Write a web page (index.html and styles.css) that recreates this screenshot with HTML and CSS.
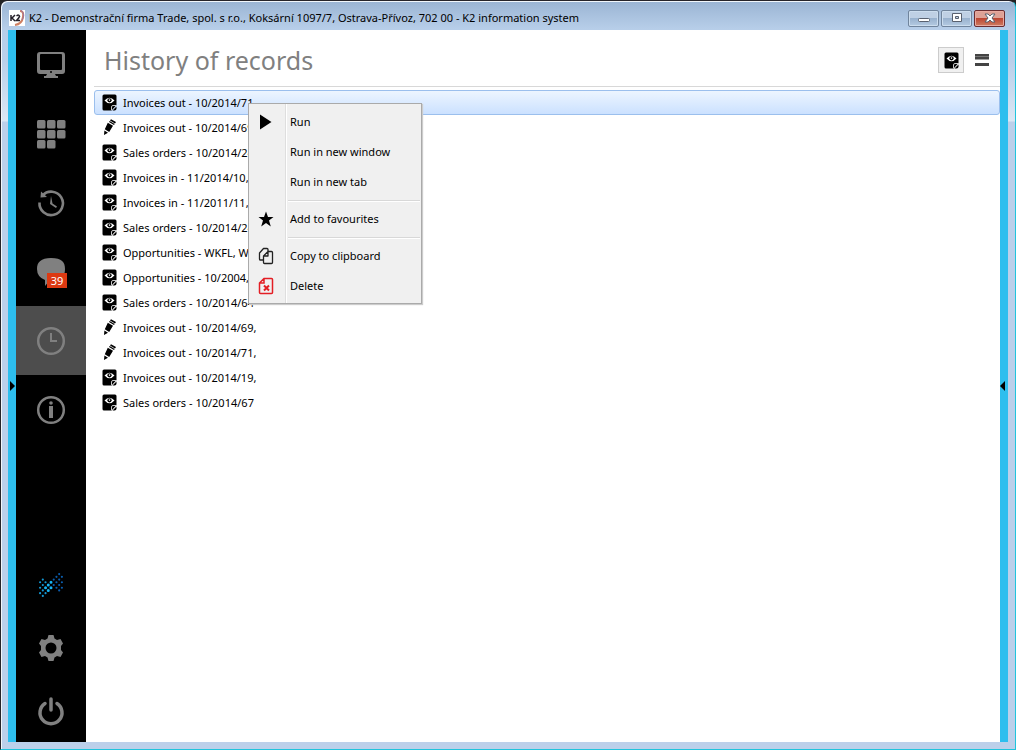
FILE: index.html
```html
<!DOCTYPE html>
<html lang="en">
<head>
<meta charset="utf-8">
<title>K2 information system</title>
<link rel="stylesheet" href="styles.css">
</head>
<body>
<svg class="defs" aria-hidden="true">
  <symbol id="record" viewBox="0 0 15 17">
    <path d="M2 0.500H13Q14.500 .5 14.500 2V11L9.500 16.500H2Q.5 16.500 .5 15V2Q.5 .5 2 .5Z" fill="#000"/>
    <path d="M2.500 6.500Q7.500 .8 12.500 6.500Q7.500 12 2.500 6.500Z" fill="#fff"/>
    <circle cx="7.500" cy="6.300" r="2.100" fill="#000"/><circle cx="7.500" cy="6.100" r=".8" fill="#fff"/>
    <path d="M10.500 16.500L14.500 12.500V14.500Q14.500 16.500 12.500 16.500Z" fill="#000"/>
    <path d="M9.500 16V13Q9.500 11.500 11 11.500H14" fill="none" stroke="#ddd" stroke-width=".9"/>
  </symbol>
  <symbol id="pencil" viewBox="0 0 15 17">
    <path d="M5.800 3.800L11 6.800L7.200 13L2.800 10.300Z M8 1.500L9 .2L14 3L13 4.600Z M7 2.900L7.600 2.100L12.700 5.100L12 6Z M2.400 11.500L6 13.800L2 16Z"/>
  </symbol>
</svg>
<div class="window">
  <header class="titlebar">
    <svg class="app-icon" viewBox="0 0 16 16"><path fill="#fff" d="M0 0H16V16H0Z"/><path d="M11 1Q15 1 14 7Q13 14 6 15" fill="none" stroke="#ce7f62" stroke-width="2"/><path d="M12 0Q17 5 13 10" fill="none" stroke="#9a73a5"/><path d="M2 5V11M6 5L3 8L6 11M7.500 6Q10 4 10.500 6.500Q10 8 7.500 10.500H11" fill="none" stroke="#24202a" stroke-width="1.500"/></svg>
    <span class="caption">K2 - Demonstrační firma Trade, spol. s r.o., Koksární 1097/7, Ostrava-Přívoz, 702 00 - K2 information system</span>
    <div class="window-buttons">
      <button aria-label="Minimize"><svg viewBox="0 0 12 10"><rect x=".5" y="5.500" width="11" height="3" rx="1"/></svg></button>
      <button aria-label="Maximize"><svg viewBox="0 0 12 10"><path fill-rule="evenodd" d="M1.500 .5H10.500V8.500H1.500ZM4.500 3.500V5.500H7.500V3.500Z"/></svg></button>
      <button class="close" aria-label="Close"><svg viewBox="0 0 12 10"><path d="M1 1H4L6 3L8 1H11L8 5L11 9H8L6 7L4 9H1L4 5Z"/></svg></button>
    </div>
  </header>
  <div class="body">
    <button class="rail" aria-label="Expand left panel"><svg viewBox="0 0 5 10"><path d="M0 0L5 5L0 10Z"/></svg></button>
    <nav class="sidebar">
      <div class="group">
        <button aria-label="Desktop"><svg viewBox="0 0 30 30"><path fill-rule="evenodd" d="M4 2H26Q29 2 29 5V21Q29 24 26 24H19L20 26H22V28H8V26H10L11 24H4Q1 24 1 21V5Q1 2 4 2ZM5 4Q4 4 4 5V19Q4 20 5 20H25Q26 20 26 19V5Q26 4 25 4Z"/><circle cx="15" cy="22" r="1" fill="#000"/></svg></button>
        <button aria-label="Modules"><svg viewBox="0 0 30 30"><rect x="1" y="1" width="8.500" height="8.500" rx="1.500"/><rect x="11" y="1" width="8.500" height="8.500" rx="1.500"/><rect x="21" y="1" width="8.500" height="8.500" rx="1.500"/><rect x="1" y="11" width="8.500" height="8.500" rx="1.500"/><rect x="11" y="11" width="8.500" height="8.500" rx="1.500"/><rect x="21" y="11" width="8.500" height="8.500" rx="1.500"/><rect x="1" y="21" width="8.500" height="8.500" rx="1.500"/><rect x="11" y="21" width="8.500" height="8.500" rx="1.500"/></svg></button>
        <button aria-label="Recent"><svg viewBox="0 0 30 30"><path d="M6.500 7.500A11.700 11.700 0 1 1 3.500 14.500" fill="none" stroke="#808080" stroke-width="2.600"/><path d="M5 3.500L4.500 9.500L11 9Z M15 8L14 16L20 20L21 18.500L16.500 15.500Z"/></svg></button>
        <button class="chat" aria-label="Messages, 39 new"><svg viewBox="0 0 30 30"><path d="M15 1C26 1 29 5 29 12C29 20 25 23 15 23Q13 24 9 29L9 23Q1 20 1 12C1 5 5 1 15 1Z"/></svg><span class="badge">39</span></button>
        <button class="active" aria-label="History"><svg viewBox="0 0 30 30" fill="none" stroke="#808080" stroke-width="2.500"><circle cx="15" cy="15" r="12.800"/><path d="M15 7V15H21" stroke-width="2"/></svg></button>
        <button aria-label="Information"><svg viewBox="0 0 30 30"><circle cx="15" cy="15" r="12.800" fill="none" stroke="#808080" stroke-width="2.500"/><circle cx="15" cy="8" r="1.800"/><path d="M13 11H17V23H13Z"/></svg></button>
      </div>
      <div class="group bottom">
        <button aria-label="K2"><svg viewBox="-1.500 -1.500 11 11" fill="none" stroke-linecap="round" stroke-width=".8"><path stroke="#0a5dae" d="M7 0h0M6 1h0M8 1h0M5 2h0M7 2h0M6 3h0M8 3h0M5 4h0M7 4h0M6 5h0M8 5h0M7 6h0"/><path stroke="#1297d4" d="M1 2h0M0 3h0M2 3h0M1 4h0M0 5h0M0 7h0M2 7h0M1 8h0M1 6h0"/><path stroke="#16b4f5" stroke-width="1.100" d="M4 3h0M3 4h0M2 5h0M4 5h0M3 6h0"/></svg></button>
        <button aria-label="Settings"><svg viewBox="0 0 30 30"><path fill-rule="evenodd" d="M12.500 2H17.500L18.500 5.500L21 7L24.500 6L27 10.500L25 13V17L27 19.500L24.500 24L21 23L18.500 24.500L17.500 28H12.500L11.500 24.500L9 23L5.500 24L3 19.500L5 17V13L3 10.500L5.500 6L9 7L11.500 5.500ZM15 9.500A5.500 5.500 0 1 0 15 20.500A5.500 5.500 0 1 0 15 9.500Z"/></svg></button>
        <button aria-label="Log out"><svg viewBox="0 0 30 30" fill="none" stroke="#808080" stroke-width="3.500" stroke-linecap="round"><path d="M9 7.500A11 11 0 1 0 21 7.500M15 3V14"/></svg></button>
      </div>
    </nav>
    <main>
      <div class="heading">
        <h1>History of records</h1>
        <button class="view" aria-label="View record"><svg class="record"><use href="#record"/></svg></button>
        <button class="menu-button" aria-label="Menu"><svg viewBox="0 0 16 14"><path d="M1 1H15V6.500H1ZM1 10H15V13H1Z" fill="#444"/><path d="M1 3.500H15" stroke="#777"/></svg></button>
      </div>
      <ul class="records">
        <li class="selected"><svg class="record"><use href="#record"/></svg>Invoices out - 10/2014/71</li>
        <li><svg class="record"><use href="#pencil"/></svg>Invoices out - 10/2014/69</li>
        <li><svg class="record"><use href="#record"/></svg>Sales orders - 10/2014/24</li>
        <li><svg class="record"><use href="#record"/></svg>Invoices in - 11/2014/10,</li>
        <li><svg class="record"><use href="#record"/></svg>Invoices in - 11/2011/11,</li>
        <li><svg class="record"><use href="#record"/></svg>Sales orders - 10/2014/24</li>
        <li><svg class="record"><use href="#record"/></svg>Opportunities - WKFL, W</li>
        <li><svg class="record"><use href="#record"/></svg>Opportunities - 10/2004,</li>
        <li><svg class="record"><use href="#record"/></svg>Sales orders - 10/2014/64</li>
        <li><svg class="record"><use href="#pencil"/></svg>Invoices out - 10/2014/69,</li>
        <li><svg class="record"><use href="#pencil"/></svg>Invoices out - 10/2014/71,</li>
        <li><svg class="record"><use href="#record"/></svg>Invoices out - 10/2014/19,</li>
        <li><svg class="record"><use href="#record"/></svg>Sales orders - 10/2014/67</li>
      </ul>
      <div class="context-menu" role="menu">
        <button role="menuitem"><svg viewBox="0 0 16 18"><path d="M2 1.500L13.500 9L2 16.500Z"/></svg><span>Run</span></button>
        <button role="menuitem"><i></i><span>Run in new window</span></button>
        <button role="menuitem"><i></i><span>Run in new tab</span></button>
        <hr>
        <button role="menuitem"><svg viewBox="0 0 16 18"><path d="M8 1.500L10 7H15.500L11 10.500L12.800 16.500L8 13L3.200 16.500L5 10.500L.5 7H6Z"/></svg><span>Add to favourites</span></button>
        <hr>
        <button role="menuitem"><svg viewBox="0 0 16 18" fill="none" stroke="#222" stroke-width="1.300" stroke-linejoin="round"><path d="M5.500 13H2Q1.500 13 1.500 12V6L5.500 1.500H9Q10 1.500 10 2.500V4"/><path d="M5.500 9L10 4.500H13.500Q14.500 4.500 14.500 5.500V15.500Q14.500 16.500 13.500 16.500H6.500Q5.500 16.500 5.500 15.500ZM5.500 9H10V4.500"/></svg><span>Copy to clipboard</span></button>
        <button role="menuitem"><svg viewBox="0 0 16 18" fill="none" stroke="#e31e24" stroke-width="1.500"><path d="M1.500 6L6 1.500H13.500Q14.500 1.500 14.500 2.500V15.500Q14.500 16.500 13.500 16.500H2.500Q1.500 16.500 1.500 15.500ZM1.500 6H6V2"/><path d="M6 8.500L11 13.500M11 8.500L6 13.500" stroke-width="2"/></svg><span>Delete</span></button>
      </div>
    </main>
    <button class="rail right" aria-label="Expand right panel"><svg viewBox="0 0 5 10"><path d="M5 0L0 5L5 10Z"/></svg></button>
  </div>
</div>
</body>
</html>
```
FILE: styles.css
```css
* { box-sizing: border-box; }
body { margin: 0; background: #222; font: 11px/16px "Noto Sans", "Open Sans", sans-serif; color: #000; }
button { margin: 0; padding: 0; border: 0; background: none; font: inherit; color: inherit; }
svg { display: block; flex: none; }
.defs { position: absolute; width: 0; height: 0; }
.window {
  display: flex; flex-direction: column; min-height: 100vh; padding: 2px 7px 7px;
  border: 1px solid #26242a; border-right-color: #21c4dc; border-bottom-color: #21c4dc;
  border-radius: 7px 7px 0 0;
  background: linear-gradient(#9ab4d3, #b7cee9 28px, #b9d0ea 60px, #dbe7f4 120px, #bcd0ea 121px);
  box-shadow: inset 1px 1px #f1f6fb;
}
.titlebar { display: flex; align-items: center; height: 27px; gap: 4px; padding: 3px 3px 0 1px; }
.app-icon { width: 16px; height: 16px; }
.caption { flex: 1; white-space: nowrap; overflow: hidden; }
.window-buttons { display: flex; gap: 2px; }
.window-buttons button { display: grid; place-items: center; width: 31px; height: 17px; border: 1px solid #70849c; border-radius: 2px; box-shadow: inset 0 0 0 1px #ccddee; background: linear-gradient(#bfd0e4 45%, #99b2ce 50%, #b4cae2); }
.window-buttons svg { width: 12px; height: 10px; fill: #fff; stroke: #59616f; }
.window-buttons .close { border-color: #692d31; box-shadow: inset 0 0 0 1px #e9aaa0; background: linear-gradient(#dda196 45%, #bd4633 50%, #ce7d62); }
.body { display: flex; flex: 1; }
.rail { display: grid; place-items: center; flex: none; width: 8px; background: #2dbeee; }
.rail.right { place-items: center start; }
.rail svg { width: 5px; height: 10px; }
.sidebar { display: flex; flex-direction: column; justify-content: space-between; flex: none; width: 70px; background: #000; }
.group { display: grid; grid-auto-rows: 69px; }
.group.bottom { grid-auto-rows: 63px; }
.sidebar button { display: grid; place-items: center; }
.sidebar svg { width: 30px; height: 30px; fill: #808080; }
.sidebar .active { background: #4d4d4d; }
.sidebar .active svg, .sidebar .bottom button:last-child svg { fill: none; }
.chat { position: relative; }
.badge { position: absolute; left: 31px; top: 36px; width: 20px; height: 15px; background: #dc3912; color: #fff; line-height: 15px; }
main { position: relative; flex: 1; min-width: 0; background: #fff; }
.heading { display: flex; align-items: center; height: 57px; margin-left: 8px; padding: 0 10px; border-bottom: 1px solid #d8d8d8; }
h1 { flex: 1; margin: 0; font-size: 25px; font-weight: 400; line-height: 36px; color: #808080; padding-top: 4px; }
.record { width: 15px; height: 17px; }
.view { display: grid; place-items: center; width: 26px; height: 26px; margin: 4px 10px 0 0; border: 1px solid #ccc; background: #f0f0f0; }
.menu-button { padding-top: 4px; }
.menu-button svg { width: 16px; height: 14px; }
.records { margin: 3px 0 0 8px; padding: 0; list-style: none; }
.records li { display: flex; align-items: center; gap: 6px; height: 25px; padding-left: 7px; border: 1px solid transparent; white-space: nowrap; }
.records .selected { border-color: #9bbfed; border-radius: 3px; background: linear-gradient(#edf5ff, #cbe1ff); }
.context-menu {
  position: absolute; left: 162px; top: 73px; width: 174px; padding: 3px 1px 2px;
  border: 1px solid #aaa; box-shadow: 1px 1px 1px #ccc;
  background: linear-gradient(90deg, transparent 36px, #dedede 36px, #dedede 37px, #fff 37px, #fff 38px, transparent 38px) #f0f0f0;
}
.context-menu button { display: flex; align-items: center; gap: 16px; width: 100%; height: 30px; padding-left: 8px; text-align: left; }
.context-menu svg, .context-menu i { flex: none; width: 16px; height: 18px; }
.context-menu hr { height: 2px; margin: 3px 0 2px 38px; border: 0; border-top: 1px solid #d8d8d8; background: #fff; }
```
